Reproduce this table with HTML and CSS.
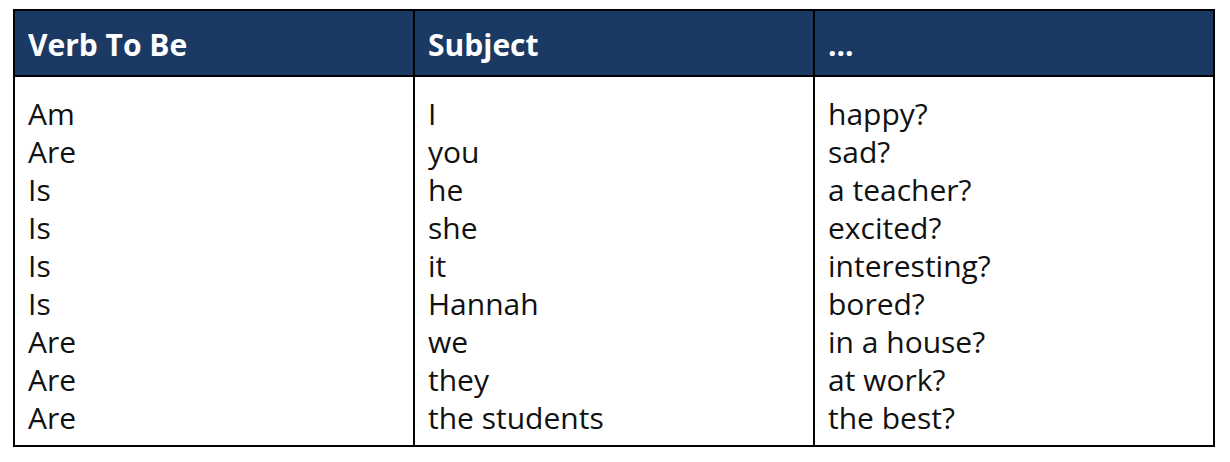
FILE: index.html
```html
<!DOCTYPE html>
<html>
<head>
<meta charset="utf-8">
<link rel="stylesheet" href="styles.css">
</head>
<body>
<table class="grammar">
  <thead>
    <tr>
      <th>Verb To Be</th>
      <th>Subject</th>
      <th>...</th>
    </tr>
  </thead>
  <tbody>
    <tr>
      <td>Am<br>Are<br>Is<br>Is<br>Is<br>Is<br>Are<br>Are<br>Are</td>
      <td>I<br>you<br>he<br>she<br>it<br>Hannah<br>we<br>they<br>the students</td>
      <td>happy?<br>sad?<br>a teacher?<br>excited?<br>interesting?<br>bored?<br>in a house?<br>at work?<br>the best?</td>
    </tr>
  </tbody>
</table>
</body>
</html>
```
FILE: styles.css
```css
html, body {
  margin: 0;
  background: #ffffff;
}
body {
  padding: 9px 0 0 13px;
  font-family: "Open Sans", "Lato", "Noto Sans", sans-serif;
}
.grammar {
  border-collapse: collapse;
  width: 1202px;
  table-layout: fixed;
}
.grammar th,
.grammar td {
  border: 2px solid #000;
  text-align: left;
  vertical-align: top;
  width: 33.33%;
}
.grammar th {
  background: #1a3963;
  color: #ffffff;
  font-weight: 700;
  font-size: 30px;
  line-height: 38px;
  height: 66px;
  padding: 4px 13px 0;
  vertical-align: middle;
  box-sizing: border-box;
}
.grammar td {
  color: #111;
  font-size: 30px;
  line-height: 38px;
  padding: 18px 13px 8px;
}
```
